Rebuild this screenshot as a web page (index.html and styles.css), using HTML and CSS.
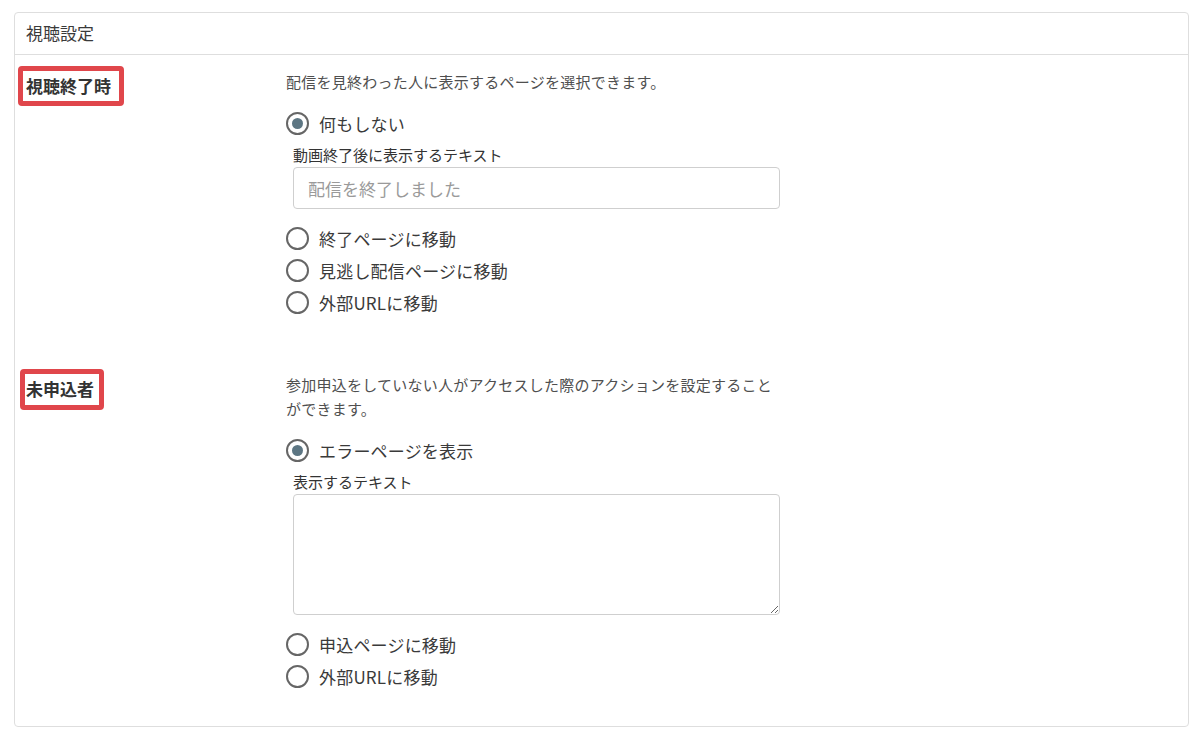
FILE: index.html
```html
<!DOCTYPE html>
<html lang="ja">
<head>
<meta charset="utf-8">
<title>視聴設定</title>
<link rel="stylesheet" href="styles.css">
</head>
<body>
<div class="card">
  <div class="card-header">視聴設定</div>
  <div class="card-body">
    <div class="section">
      <div class="label-col"><span class="tag">視聴終了時</span></div>
      <div class="field-col">
        <p class="desc">配信を見終わった人に表示するページを選択できます。</p>
        <label class="radio-row first"><input type="radio" class="radio" name="end" checked><span>何もしない</span></label>
        <div class="sub">
          <div class="sub-label">動画終了後に表示するテキスト</div>
          <input type="text" class="text-input" placeholder="配信を終了しました">
        </div>
        <div class="radio-list">
          <label class="radio-row"><input type="radio" class="radio" name="end"><span>終了ページに移動</span></label>
          <label class="radio-row"><input type="radio" class="radio" name="end"><span>見逃し配信ページに移動</span></label>
          <label class="radio-row"><input type="radio" class="radio" name="end"><span>外部URLに移動</span></label>
        </div>
      </div>
    </div>
    <div class="section second">
      <div class="label-col"><span class="tag tag-alt">未申込者</span></div>
      <div class="field-col">
        <p class="desc wrap">参加申込をしていない人がアクセスした際のアクションを設定することができます。</p>
        <label class="radio-row first"><input type="radio" class="radio" name="guest" checked><span>エラーページを表示</span></label>
        <div class="sub">
          <div class="sub-label">表示するテキスト</div>
          <textarea class="text-area"></textarea>
        </div>
        <div class="radio-list">
          <label class="radio-row"><input type="radio" class="radio" name="guest"><span>申込ページに移動</span></label>
          <label class="radio-row"><input type="radio" class="radio" name="guest"><span>外部URLに移動</span></label>
        </div>
      </div>
    </div>
  </div>
</div>
</body>
</html>
```
FILE: styles.css
```css
* { box-sizing: border-box; }
html, body { margin: 0; background: #fff; }
body {
  padding: 12px 11px 0 14px;
  font-family: "Noto Sans CJK JP", "Noto Sans", sans-serif;
  color: #333;
}
.card {
  border: 1px solid #dedede;
  border-radius: 4px;
  height: 715px;
}
.card-header {
  height: 42px;
  border-bottom: 1px solid #dedede;
  padding: 0 11px;
  font-size: 17px;
  line-height: 40px;
  color: #3a3a3a;
}
.card-body {
  padding: 11px 0 0 3px;
}
.section {
  display: grid;
  grid-template-columns: 268px 1fr;
}
.section.second { margin-top: 51px; }
.tag {
  display: inline-block;
  border: 5px solid #e0464b;
  border-radius: 4px;
  background: #fff;
  font-size: 17px;
  font-weight: 700;
  line-height: 29px;
  padding: 0 8px 1px 3px;
  color: #333;
}
.tag-alt { margin-left: 2px; padding: 0 5px 1px 1px; line-height: 30px; }
.field-col { padding-top: 4px; }
.desc {
  margin: 0;
  font-size: 15px;
  line-height: 24px;
  letter-spacing: 0.25px;
  color: #4f4f4f;
}
.desc.wrap { max-width: 500px; }
.radio-row {
  display: flex;
  align-items: center;
  gap: 10px;
  height: 32px;
  font-size: 17px;
  letter-spacing: 0.2px;
  color: #3a3a3a;
}
.radio-row.first { margin-top: 13px; }
.radio {
  appearance: none;
  -webkit-appearance: none;
  margin: 0;
  width: 23px;
  height: 23px;
  border: 2px solid #666;
  border-radius: 50%;
  display: grid;
  place-content: center;
  background: #fff;
}
.radio:checked::before {
  content: "";
  width: 11px;
  height: 11px;
  border-radius: 50%;
  background: #5d7683;
}
.sub { padding-left: 7px; }
.sub-label {
  font-size: 15px;
  line-height: 20px;
  margin-top: 6px;
  color: #333;
}
.text-input {
  display: block;
  width: 487px;
  height: 42px;
  margin-top: 2px;
  border: 1px solid #cfcfcf;
  border-radius: 4px;
  padding: 0 14px;
  font-family: inherit;
  font-size: 17px;
  color: #333;
}
.text-input::placeholder { color: #9a9a9a; }
.text-area {
  display: block;
  width: 487px;
  height: 121px;
  margin-top: 2px;
  border: 1px solid #cfcfcf;
  border-radius: 4px;
  font-family: inherit;
  font-size: 17px;
  resize: vertical;
}
.radio-list { margin-top: 13px; }
```
